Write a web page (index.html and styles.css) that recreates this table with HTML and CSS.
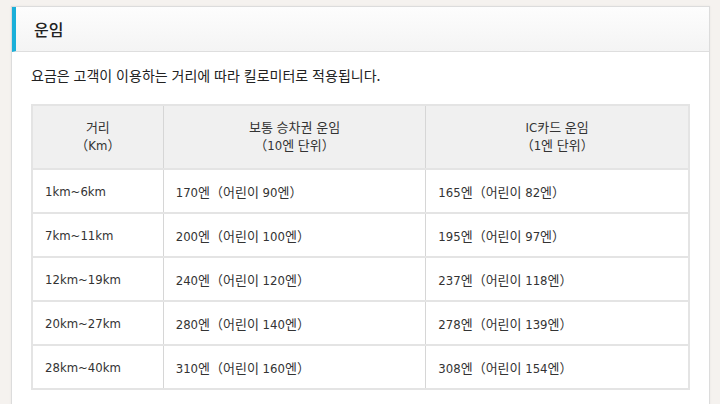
FILE: index.html
```html
<!DOCTYPE html>
<html lang="ko">
<head>
<meta charset="utf-8">
<link rel="stylesheet" href="styles.css">
</head>
<body>
<div class="card">
  <div class="card-head"><h2 class="title">운임</h2></div>
  <div class="card-body">
    <p class="lead">요금은 고객이 이용하는 거리에 따라 킬로미터로 적용됩니다.</p>
    <table class="fare">
      <thead>
        <tr><th class="c1">거리<br>（Km）</th><th class="c2">보통 승차권 운임<br>（10엔 단위）</th><th class="c3">IC카드 운임<br>（1엔 단위）</th></tr>
      </thead>
      <tbody>
        <tr><td>1km~6km</td><td>170엔（어린이 90엔）</td><td>165엔（어린이 82엔）</td></tr>
        <tr><td>7km~11km</td><td>200엔（어린이 100엔）</td><td>195엔（어린이 97엔）</td></tr>
        <tr><td>12km~19km</td><td>240엔（어린이 120엔）</td><td>237엔（어린이 118엔）</td></tr>
        <tr><td>20km~27km</td><td>280엔（어린이 140엔）</td><td>278엔（어린이 139엔）</td></tr>
        <tr><td>28km~40km</td><td>310엔（어린이 160엔）</td><td>308엔（어린이 154엔）</td></tr>
      </tbody>
    </table>
  </div>
</div>
</body>
</html>
```
FILE: styles.css
```css
html, body {
  margin: 0;
  padding: 0;
  background: #f5f2ef;
  font-family: "DejaVu Sans", "Noto Sans CJK KR", sans-serif;
  color: #333;
}
body {
  padding: 6px 10px 0 11px;
}
.card {
  width: 697px;
  background: #fff;
  border: 1px solid #dcdcdc;
  border-bottom: none;
  box-shadow: 0 0 2px rgba(0,0,0,0.06);
}
.card-head {
  height: 44px;
  border-bottom: 1px solid #dedede;
  border-left: 4px solid #1aafd9;
  background: linear-gradient(#fdfdfd, #f4f4f4);
  display: flex;
  align-items: center;
  padding-left: 18px;
}
.title {
  margin: 0;
  font-family: "Noto Sans CJK KR", sans-serif;
  font-size: 16px;
  font-weight: 500;
  color: #222;
}
.card-body {
  padding: 13px 20px 20px 19px;
}
.lead {
  margin: 0 0 19px 0;
  font-family: "Noto Sans CJK KR", sans-serif;
  font-size: 14px;
  line-height: 20px;
  color: #222;
}
.fare {
  border-collapse: collapse;
  width: 659px;
  font-family: "DejaVu Sans Condensed", "Noto Sans CJK KR", sans-serif;
  font-size: 13px;
  border: 2px solid #e4e4e4;
}
.fare th, .fare td {
  border: 1px solid #d6d6d6;
  border-top: 2px solid #e4e4e4;
  border-bottom: 2px solid #e4e4e4;
}
.fare th {
  background: #f0f0f0;
  font-weight: normal;
  height: 62px;
  line-height: 18px;
  padding: 0;
  color: #333;
}
.fare td {
  height: 42px;
  padding: 0 0 0 12px;
  text-align: left;
  color: #333;
}
.c1 { width: 130px; }
.c2 { width: 263px; }
.c3 { width: 263px; }
```
